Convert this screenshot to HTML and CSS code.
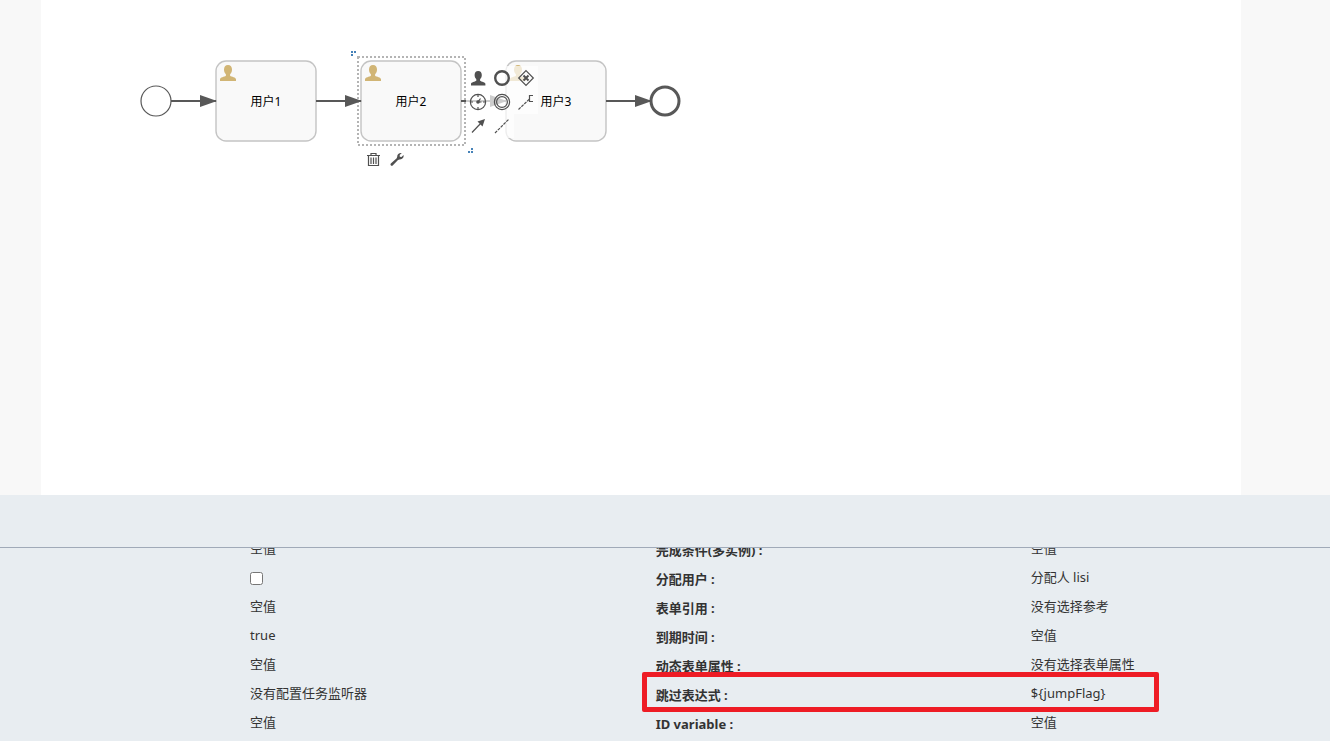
FILE: index.html
```html
<!DOCTYPE html>
<html lang="zh-CN">
<head>
<meta charset="utf-8">
<title>流程设计</title>
<link rel="stylesheet" href="styles.css">
</head>
<body>
<main class="editor">
  <section class="stage" aria-label="流程画布">
    <div class="canvas">
      <svg class="diagram" viewBox="0 0 680 200" aria-label="流程图">
        <defs>
          <marker id="arrow" markerUnits="userSpaceOnUse" markerWidth="17" markerHeight="12" refX="16" refY="6" orient="auto"><path class="solid" d="M0 0 17 6 0 12Z"/></marker>
          <path id="person" d="M8 0C5.400 0 4 1.800 4 4.500C4 6.500 4.700 8 5.900 9.200V10.700C4.500 11.800 0 12.300 0 14.300V16H16V14.300C16 12.300 11.500 11.800 10.100 10.700V9.200C11.300 8 12 6.500 12 4.500C12 1.800 10.600 0 8 0Z"/>
        </defs>
        <circle class="event" cx="115" cy="101" r="15"/>
        <rect class="selection" x="317" y="57" width="107" height="88"/>
        <g class="task"><rect x="175" y="61" width="100" height="80" rx="10"/><use href="#person" x="179" y="65"/><text x="225" y="106">用户1</text></g>
        <g class="task"><rect x="320" y="61" width="100" height="80" rx="10"/><use href="#person" x="324" y="65"/><text x="370" y="106">用户2</text></g>
        <g class="task"><rect x="465" y="61" width="100" height="80" rx="10"/><use href="#person" x="469" y="65"/><text x="515" y="106">用户3</text></g>
        <g class="flow"><path d="M130 101H175"/><path d="M275 101H320"/><path d="M420 101H465"/><path d="M565 101H610"/></g>
        <circle class="event end" cx="624" cy="101" r="14"/>
        <path class="grip" d="M310 51h2v2h-2zM313 51h2v2h-2zM310 54h2v2h-2zM430 148h2v2h-2zM430 151h2v2h-2zM427 151h2v2h-2z"/>
      </svg>
      <div class="pad pad-append">
        <button class="tool" aria-label="用户任务"><svg class="icon" viewBox="0 0 24 24"><path class="solid" transform="translate(5 5) scale(.9)" d="M8 0C5.400 0 4 1.800 4 4.500C4 6.500 4.700 8 5.900 9.200V10.700C4.500 11.800 0 12.300 0 14.300V16H16V14.300C16 12.300 11.500 11.800 10.100 10.700V9.200C11.300 8 12 6.500 12 4.500C12 1.800 10.600 0 8 0Z"/></svg></button>
        <button class="tool" aria-label="结束事件"><svg class="icon" viewBox="0 0 24 24"><circle cx="12" cy="12" r="6.800" stroke-width="2.400"/></svg></button>
        <button class="tool" aria-label="排他网关"><svg class="icon" viewBox="0 0 24 24"><path d="M12 4.700 19.300 12 12 19.300 4.700 12Z"/><path stroke-width="2" d="M9.500 9.500 14.500 14.500M14.500 9.500 9.500 14.500"/></svg></button>
        <button class="tool" aria-label="定时事件"><svg class="icon" viewBox="0 0 24 24"><circle cx="12" cy="12" r="7.600"/><path d="M12 4.500v2.500M12 17v2.500M4.500 12H7M17 12h2.500"/><path d="M14.500 8.500 12 12H15.500"/><circle class="solid" cx="12" cy="12" r="1.800"/></svg></button>
        <button class="tool" aria-label="中间事件"><svg class="icon" viewBox="0 0 24 24"><circle cx="12" cy="12" r="7.600"/><circle cx="12" cy="12" r="5.400"/></svg></button>
        <button class="tool" aria-label="文本注释"><svg class="icon" viewBox="0 0 24 24"><path stroke-dasharray="3 1" d="M4.500 19.500 15.500 9"/><path d="M19 5.500H15.500V11.500H19"/></svg></button>
        <button class="tool" aria-label="顺序流"><svg class="icon" viewBox="0 0 24 24"><path d="M6 18.500 16 8"/><path class="solid" d="M19 5 16.500 12.500 11.500 7.500Z"/></svg></button>
        <button class="tool" aria-label="关联"><svg class="icon" viewBox="0 0 24 24"><path stroke-dasharray="3 1" d="M5 19 19 5"/></svg></button>
      </div>
      <div class="pad pad-edit">
        <button class="tool" aria-label="删除"><svg class="icon" viewBox="0 0 24 24"><path d="M6 7.500H19M10 7.500V5.500H15V7.500M7.500 7.500V17.500H17.500V7.500M10 9.500V16M12.500 9.500V16M15 9.500V16"/></svg></button>
        <button class="tool" aria-label="更改类型"><svg class="icon" viewBox="0 0 24 24"><path class="solid" d="M16.800 5C14.500 4.500 12 6 12.200 8.700L11.700 10.300 5.800 15.400C4.700 16.500 6.400 18.600 7.700 17.500L13 11.900 14.500 11.500C17.300 11.800 19.100 9.500 18.500 7.100L16.500 9 14.800 8.700 14.700 7Z"/></svg></button>
      </div>
    </div>
  </section>
  <section class="properties" aria-label="属性">
    <header class="properties-head"></header>
    <div class="properties-body">
      <div class="sheet">
        <table class="fields">
          <colgroup><col class="col-lead"><col class="col-value"><col class="col-label"><col></colgroup>
          <tbody>
            <tr><td></td><td>空值</td><th scope="row">完成条件(多实例)&nbsp;:</th><td>空值</td></tr>
            <tr><td></td><td><input class="check" type="checkbox" aria-label="启用"></td><th scope="row">分配用户&nbsp;:</th><td>分配人 lisi</td></tr>
            <tr><td></td><td>空值</td><th scope="row">表单引用&nbsp;:</th><td>没有选择参考</td></tr>
            <tr><td></td><td>true</td><th scope="row">到期时间&nbsp;:</th><td>空值</td></tr>
            <tr><td></td><td>空值</td><th scope="row">动态表单属性&nbsp;:</th><td>没有选择表单属性</td></tr>
            <tr><td></td><td>没有配置任务监听器</td><th scope="row">跳过表达式&nbsp;:</th><td>${jumpFlag}</td></tr>
            <tr><td></td><td>空值</td><th scope="row">ID variable&nbsp;:</th><td>空值</td></tr>
          </tbody>
        </table>
        <div class="highlight"></div>
      </div>
    </div>
  </section>
</main>
</body>
</html>
```
FILE: styles.css
```css
* { box-sizing: border-box; }
body {
  margin: 0;
  color: #333;
  font: 13px/20px "Noto Sans", "Noto Sans CJK SC", sans-serif;
}
.editor {
  display: flex;
  flex-direction: column;
  height: 100vh;
  overflow: hidden;
}
.stage {
  flex: 1;
  display: flex;
  padding: 0 89px 0 41px;
  background: #f8f8f8;
}
.canvas {
  position: relative;
  flex: 1;
  background: #fff;
}
.diagram { display: block; width: 680px; height: 200px; }
.solid { fill: #585858; stroke: none; }
.event { fill: #fff; stroke: #585858; stroke-width: 1.2; }
.end { stroke-width: 3; }
.flow { fill: none; stroke: #585858; stroke-width: 2; }
.flow path { marker-end: url(#arrow); }
.task rect { fill: #f9f9f9; stroke: #c4c4c4; stroke-width: 1.4; }
.task use { fill: #d1b575; }
.task text {
  fill: #000;
  font: 12px "Noto Sans", "Noto Sans CJK SC", sans-serif;
  text-anchor: middle;
}
.selection { fill: none; stroke: #b4b4b4; stroke-width: 2; stroke-dasharray: 2 2; }
.grip { fill: #4682b8; }
.pad { position: absolute; display: flex; flex-wrap: wrap; }
.pad-append { left: 425px; top: 66px; width: 72px; }
.pad-edit { left: 320px; top: 148px; }
.tool {
  width: 24px;
  height: 24px;
  padding: 0;
  border: 0;
  background: rgba(255, 255, 255, 0.7);
}
.icon { display: block; width: 24px; height: 24px; fill: none; stroke: #505050; stroke-width: 1.2; }
.icon .solid { fill: #505050; stroke: none; }
.properties { flex: none; background: #e8edf1; }
.properties-head { height: 53px; border-bottom: 1px solid #a0aab8; }
.properties-body { height: 193px; overflow: hidden; }
.sheet { position: relative; margin-top: -14px; }
.fields { width: 100%; table-layout: fixed; border-collapse: collapse; }
.col-lead { width: 18.800%; }
.col-value { width: 30.500%; }
.col-label { width: 28.200%; }
.fields tr { height: 29px; }
.fields td, .fields th { padding: 4px 0 5px; text-align: left; vertical-align: top; white-space: nowrap; }
.fields th { padding: 6px 0 3px; font-weight: 700; }
.check { display: block; width: 13px; height: 13px; margin: 5px 0 0; }
.highlight {
  position: absolute;
  top: 138px;
  left: 48.250%;
  right: 12.850%;
  height: 40px;
  border: 5px solid #ee1c25;
  border-radius: 2px;
}
```
